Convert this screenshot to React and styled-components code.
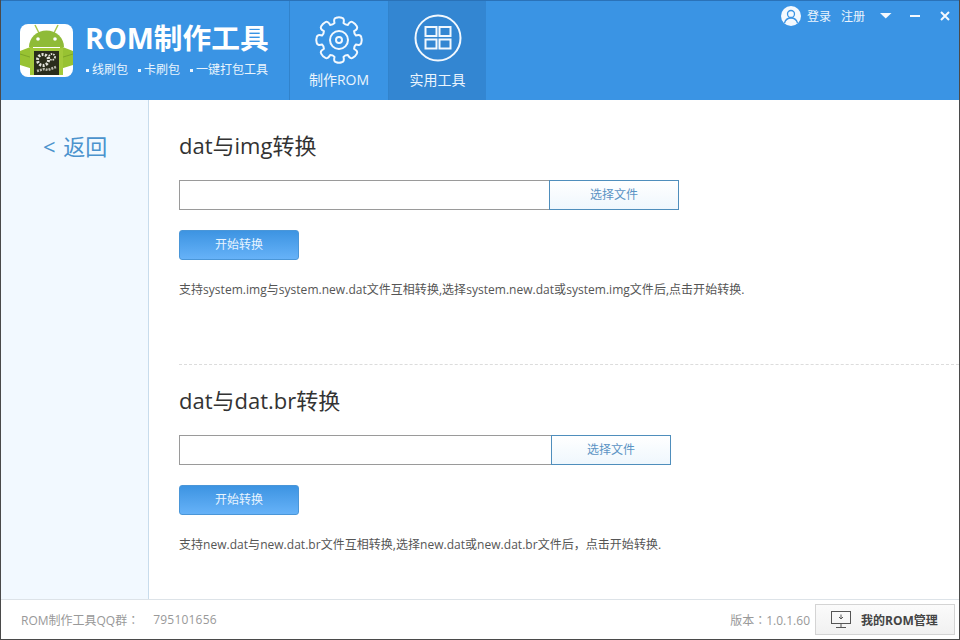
import styled, { createGlobalStyle } from "styled-components"

const Global = createGlobalStyle`
    html, body { margin: 0; padding: 0; background: #fff; }
    * { box-sizing: border-box; }
    body { font-family: "Open Sans", "Noto Sans CJK SC", sans-serif; }
`
const Frame = styled.div`
    width: 960px;
    height: 640px;
    display: flex;
    flex-direction: column;
    overflow: hidden;
    border-left: 1px solid #4a4a4a;
    border-right: 1px solid #4a4a4a;
    border-bottom: 1px solid #4a4a4a;
    background: #fff;
`
const Header = styled.header`
    height: 100px;
    margin: 0 -1px;
    flex: none;
    display: flex;
    background: #3a94e4;
    border-top: 1px solid #2a72b8;
    position: relative;
`
const Brand = styled.div`
    width: 289px;
    display: flex;
    gap: 13px;
    padding: 23px 0 0 20px;
`
const BrandText = styled.div`
    display: flex;
    flex-direction: column;
    color: #fff;
`
const BrandTitle = styled.div`
    font-size: 28.7px;
    font-weight: 700;
    line-height: 30px;
    height: 30px;
    margin: -1px 0 0 -1px;
    white-space: nowrap;
`
const Tags = styled.div`
    display: flex;
    gap: 10px;
    margin-top: 9px;
    font-size: 12px;
    line-height: 16px;
    color: #eaf4fd;
    white-space: nowrap;
`
const Tag = styled.span`
    display: flex;
    align-items: center;
    gap: 3px;
    &::before {
        content: "";
        width: 3px;
        height: 3px;
        background: #eaf4fd;
    }
`
const Tab = styled.div`
    width: ${p => p.$width}px;
    display: flex;
    flex-direction: column;
    align-items: center;
    padding-top: 13px;
    gap: 9px;
    border-left: 1px solid #3183cc;
    background: ${p => (p.$active ? "#3386d2" : "transparent")};
    color: #eaf4fd;
    font-size: 14px;
    line-height: 18px;
`
const TabIcon = styled.svg`
    display: block;
    overflow: visible;
    fill: none;
    stroke: #f2f8fe;
    stroke-width: 2;
`
const TopBar = styled.div`
    position: absolute;
    top: 4px;
    right: 5px;
    height: 21px;
    display: flex;
    align-items: center;
    color: #eaf4fd;
    font-size: 12px;
`
const TopLink = styled.span`
    margin-left: ${p => p.$gap}px;
`
const Controls = styled.svg`
    display: block;
    margin-left: 15px;
`
const Body = styled.div`
    flex: 1;
    display: flex;
    min-height: 0;
`
const Sidebar = styled.aside`
    width: 148px;
    background: #f2f9ff;
    border-right: 1px solid #c8dcec;
    padding: 30px 0 0 42px;
`
const Back = styled.div`
    height: 32px;
    line-height: 32px;
    font-size: 22px;
    word-spacing: 2px;
    color: #4b93cd;
`
const Content = styled.main`
    flex: 1;
    display: flex;
    flex-direction: column;
`
const Section = styled.section`
    height: ${p => p.$height}px;
    margin-left: 30px;
    padding-top: ${p => p.$top}px;
    border-bottom: ${p => (p.$divider ? "1px dashed #dcdcdc" : "none")};
`
const Title = styled.h2`
    margin: 0;
    height: 32px;
    font-size: 22px;
    font-weight: 400;
    line-height: 32px;
    color: #333;
    white-space: nowrap;
`
const FileRow = styled.div`
    display: flex;
    margin-top: 19px;
    height: 30px;
`
const PathInput = styled.input`
    width: ${p => p.$width}px;
    height: 30px;
    border: 1px solid #9a9a9a;
    border-right: 0;
    background: #fff;
    outline: none;
`
const FileButton = styled.button`
    width: ${p => p.$width}px;
    height: 30px;
    padding: 0 0 3px;
    border: 1px solid #4f8ebc;
    background: linear-gradient(#ffffff, #eff7fd);
    color: #5b93c4;
    font: 12px "Noto Sans CJK SC", sans-serif;
`
const StartButton = styled.button`
    display: block;
    width: 120px;
    height: 30px;
    margin-top: 20px;
    padding: 0 0 3px;
    border: 1px solid #4a96d8;
    border-radius: 3px;
    background: linear-gradient(#3d94e2, #66b2f8);
    color: #e8f4ff;
    font: 12px "Noto Sans CJK SC", sans-serif;
`
const Note = styled.p`
    margin: 21px 0 0;
    font-size: 12px;
    line-height: 18px;
    letter-spacing: 0.03px;
    color: #555;
    white-space: nowrap;
`
const Footer = styled.footer`
    height: 40px;
    flex: none;
    display: flex;
    align-items: center;
    border-top: 1px solid #dde3e8;
    padding: 0 4px 0 20px;
    font-size: 12px;
    color: #999;
`
const Colon = styled.span`
    font-family: "Noto Sans CJK TC", sans-serif;
`
const QQ = styled.span`
    margin-left: 14px;
    letter-spacing: 0.2px;
`
const Version = styled.span`
    margin-left: auto;
    margin-right: 5px;
`
const ManageButton = styled.div`
    width: 140px;
    height: 31px;
    display: flex;
    align-items: center;
    gap: 10px;
    padding-left: 15px;
    border: 1px solid #d4d4d4;
    background: linear-gradient(#fbfbfb, #f1f1f1);
    color: #444;
    font-weight: 700;
    white-space: nowrap;
`

function AndroidLogo() {
    return (
        <svg width="53" height="53" viewBox="0 0 53 53">
            <rect width="53" height="53" rx="8" fill="#fff" />
            <path d="M15 1l4 8M38 1l-4 8" stroke="#a9c84a" strokeWidth="1.5" />
            <path d="M9 23a17 16 0 0 1 35 0z" fill="#8fbb37" />
            <circle cx="18" cy="15" r="1.8" fill="#fff" />
            <circle cx="35" cy="15" r="1.8" fill="#fff" />
            <path d="M0 27l13-5v23L0 41zM53 27l-13-5v23l13-4z" fill="#98c232" />
            <path d="M0 30l13 4M53 30l-13 4" stroke="#7ea528" />
            <rect x="10" y="24" width="33" height="27" fill="#a3c93a" />
            <rect x="14" y="27" width="25" height="24" fill="#2a2d1c" />
            <g fill="none" stroke="#e4e4dc">
                <circle cx="23" cy="36" r="5.5" strokeWidth="3" strokeDasharray="2 1.4" />
                <circle cx="32" cy="33" r="3" strokeWidth="1.8" strokeDasharray="1.5 1" />
            </g>
            <path d="M17 47l7-2 4 1 8-3" fill="none" stroke="#b8b8ac" strokeWidth="2.5" strokeDasharray="2 1" />
        </svg>
    )
}

function GearIcon() {
    const cx = 24
    const cy = 26
    const pt = (r, t) => `${(cx + r * Math.cos(t)).toFixed(1)} ${(cy + r * Math.sin(t)).toFixed(1)}`
    let d = ""
    for (let i = 0; i < 8; i++) {
        const a = (i * Math.PI) / 4
        d += `${i === 0 ? "M" : "L"}${pt(17.5, a - 0.26)} `
        d += `Q${pt(22.5, a - 0.26)} ${pt(22.5, a - 0.12)} `
        d += `Q${pt(23.2, a)} ${pt(22.5, a + 0.12)} `
        d += `Q${pt(22.5, a + 0.26)} ${pt(17.5, a + 0.26)} `
        d += `Q${pt(16.3, a + Math.PI / 8)} ${pt(17.5, a + Math.PI / 4 - 0.26)} `
    }
    return (
        <TabIcon width="48" height="48" viewBox="0 0 48 48">
            <path d={d + "Z"} strokeLinejoin="round" />
            <circle cx={cx} cy={cy} r="9" />
            <circle cx={cx} cy={cy} r="3" />
        </TabIcon>
    )
}

function ToolsIcon() {
    return (
        <TabIcon width="48" height="48" viewBox="0 0 48 48">
            <circle cx="24" cy="24" r="22.5" />
            <rect x="11.5" y="13" width="11" height="9" />
            <rect x="25.5" y="13" width="11" height="9" />
            <rect x="11.5" y="25.5" width="11" height="9" />
            <rect x="25.5" y="25.5" width="11" height="9" />
        </TabIcon>
    )
}

function UserIcon() {
    return (
        <svg width="20" height="20" viewBox="0 0 20 20">
            <circle cx="10" cy="10" r="10" fill="#f4f9fe" />
            <circle cx="10" cy="8" r="3.5" fill="none" stroke="#3a94e4" strokeWidth="1.3" />
            <path d="M3.5 17c1-3.5 3.500-5 6.500-5s5.500 1.500 6.500 5" fill="none" stroke="#3a94e4" strokeWidth="1.3" />
        </svg>
    )
}

function WindowControls() {
    return (
        <Controls width="75" height="20" viewBox="0 0 75 20">
            <path d="M0 7h11.500l-5.750 5.500z" fill="#f4f9fe" />
            <path d="M30 10h10" stroke="#f4f9fe" strokeWidth="2" />
            <path d="M61 6l8 8M69 6l-8 8" stroke="#f4f9fe" strokeWidth="2" />
        </Controls>
    )
}

function MonitorIcon() {
    return (
        <svg width="20" height="18" viewBox="0 0 20 18" fill="none" stroke="#555">
            <rect x="0.5" y="0.5" width="19" height="12" />
            <path d="M10 3.500v4M8 6l2 2 2-2M10 13v3M5 16.500h10" />
        </svg>
    )
}

function Converter({ height, top, divider, title, inputWidth, buttonWidth, note }) {
    return (
        <Section $height={height} $top={top} $divider={divider}>
            <Title>{title}</Title>
            <FileRow>
                <PathInput $width={inputWidth} />
                <FileButton $width={buttonWidth}>选择文件</FileButton>
            </FileRow>
            <StartButton>开始转换</StartButton>
            <Note>{note}</Note>
        </Section>
    )
}

export default function App() {
    return (
        <Frame>
            <Global />
            <Header>
                <Brand>
                    <AndroidLogo />
                    <BrandText>
                        <BrandTitle>ROM制作工具</BrandTitle>
                        <Tags>
                            <Tag>线刷包</Tag>
                            <Tag>卡刷包</Tag>
                            <Tag>一键打包工具</Tag>
                        </Tags>
                    </BrandText>
                </Brand>
                <Tab $width={99}>
                    <GearIcon />
                    制作ROM
                </Tab>
                <Tab $width={98} $active>
                    <ToolsIcon />
                    实用工具
                </Tab>
                <TopBar>
                    <UserIcon />
                    <TopLink $gap={6}>登录</TopLink>
                    <TopLink $gap={10}>注册</TopLink>
                    <WindowControls />
                </TopBar>
            </Header>
            <Body>
                <Sidebar>
                    <Back>&lt; 返回</Back>
                </Sidebar>
                <Content>
                    <Converter
                        height={265}
                        top={29}
                        divider
                        title="dat与img转换"
                        inputWidth={370}
                        buttonWidth={130}
                        note="支持system.img与system.new.dat文件互相转换,选择system.new.dat或system.img文件后,点击开始转换."
                    />
                    <Converter
                        height={234}
                        top={19}
                        title="dat与dat.br转换"
                        inputWidth={372}
                        buttonWidth={120}
                        note="支持new.dat与new.dat.br文件互相转换,选择new.dat或new.dat.br文件后，点击开始转换."
                    />
                </Content>
            </Body>
            <Footer>
                ROM制作工具QQ群<Colon>：</Colon>
                <QQ>795101656</QQ>
                <Version>版本<Colon>：</Colon>1.0.1.60</Version>
                <ManageButton>
                    <MonitorIcon />
                    我的ROM管理
                </ManageButton>
            </Footer>
        </Frame>
    )
}
